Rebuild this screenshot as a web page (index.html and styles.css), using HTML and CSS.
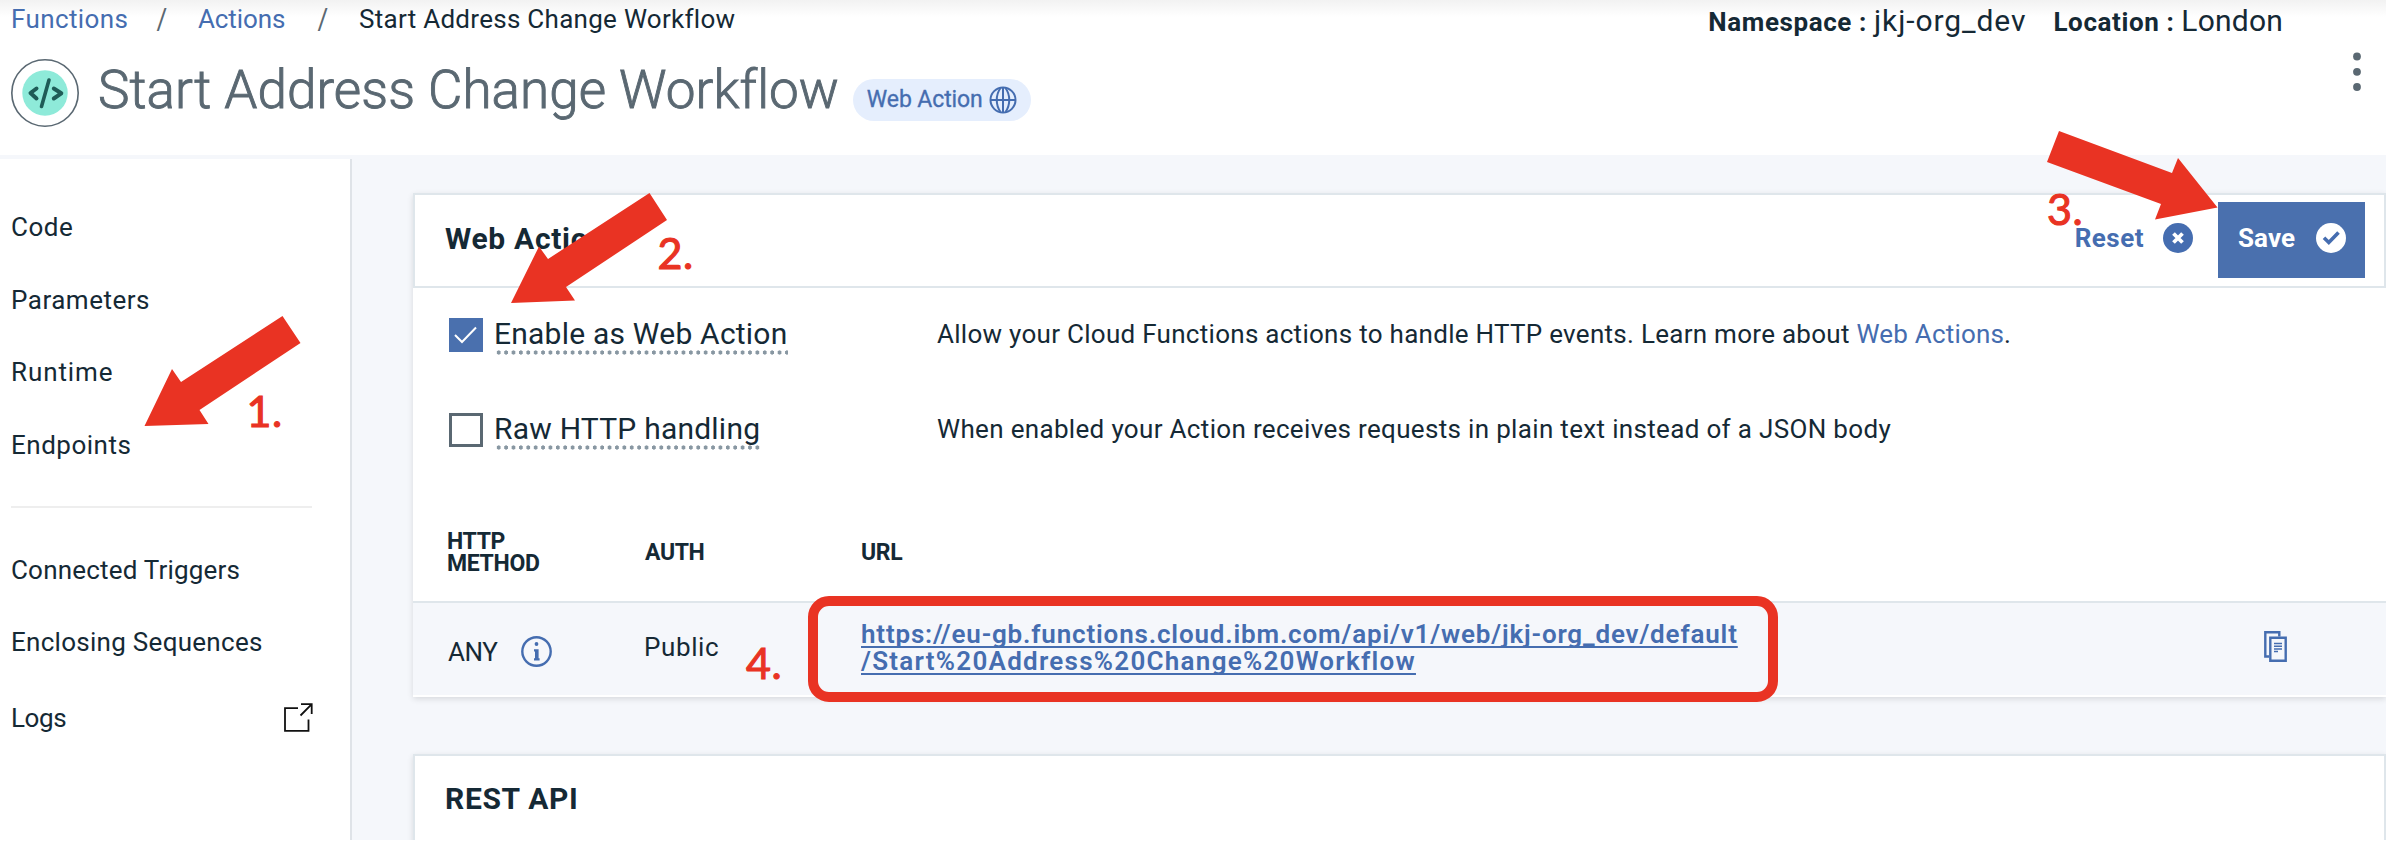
FILE: index.html
```html
<!DOCTYPE html>
<html lang="en">
<head>
<meta charset="utf-8">
<title>Start Address Change Workflow</title>
<link rel="stylesheet" href="styles.css">
</head>
<body>
<div class="page">
  <header class="header">
    <div class="header-top">
      <nav class="breadcrumb">
        <a class="crumb crumb-functions">Functions</a><span class="slash">/</span><a class="crumb crumb-actions">Actions</a><span class="slash">/</span><span class="crumb-current">Start Address Change Workflow</span>
      </nav>
      <div class="meta">
        <span class="meta-label">Namespace :</span><span class="meta-value meta-namespace">jkj-org_dev</span>
        <span class="meta-label">Location :</span><span class="meta-value">London</span>
      </div>
    </div>
    <div class="title-row">
      <svg class="action-icon" width="70" height="70" viewBox="0 0 70 70">
        <circle cx="35" cy="35" r="33.2" fill="#fff" stroke="#5a6872" stroke-width="1.6"/>
        <circle cx="35" cy="35" r="22.7" fill="#8eead9"/>
        <g fill="none" stroke="#1f5c57" stroke-width="4" stroke-linecap="round" stroke-linejoin="round">
          <path d="M26.5 30.5 20.5 35l6 5.500M43.800 30.500l7.500 4.800-7.500 5.200"/>
          <path d="M39 22 31.500 48.500" stroke-width="3.600"/>
        </g>
      </svg>
      <h1 class="title">Start Address Change Workflow</h1>
      <span class="badge">Web Action
        <svg class="globe" width="28" height="28" viewBox="0 0 28 28" fill="none" stroke="#456db0" stroke-width="2">
          <circle cx="14" cy="14" r="12.500"/><path d="M14 1.500v25M1.500 14h25"/>
          <path d="M11.500 2C6.500 9 6.500 19 11.500 26M16.500 2c5 7 5 17 0 24"/>
        </svg>
      </span>
      <svg class="kebab" width="10" height="40" viewBox="0 0 10 40" fill="#5a6872"><circle cx="5" cy="4.500" r="3.900"/><circle cx="5" cy="19.800" r="3.900"/><circle cx="5" cy="35" r="3.900"/></svg>
    </div>
  </header>

  <div class="content">
    <aside class="sidebar">
      <a class="nav-item n-wide">Code</a>
      <a class="nav-item n-wide">Parameters</a>
      <a class="nav-item n-wider">Runtime</a>
      <a class="nav-item n-wide">Endpoints</a>
      <hr class="divider">
      <a class="nav-item n-tight">Connected Triggers</a>
      <a class="nav-item">Enclosing Sequences</a>
      <a class="nav-item nav-logs"><span>Logs</span>
        <svg width="30" height="30" viewBox="0 0 30 30" fill="none" stroke="#111" stroke-width="1.800">
          <path d="M15 5.200H2v22.600h23.500V16.500"/><path d="M18 1.200h10.700V11M28.500 1.400 17.500 12.500"/>
        </svg>
      </a>
    </aside>

    <main class="main">
      <section class="card">
        <div class="card-head">
          <h2 class="card-title">Web Action</h2>
          <div class="head-actions">
            <button class="reset">Reset
              <svg width="30" height="30" viewBox="0 0 30 30"><circle cx="15" cy="15" r="15" fill="#456db0"/><path d="m10.500 10.500 9 9m0-9-9 9" stroke="#fff" stroke-width="3.800"/></svg>
            </button>
            <button class="save">Save
              <svg width="30" height="30" viewBox="0 0 30 30"><circle cx="15" cy="15" r="15" fill="#fff"/><path d="m8 14.800 4.800 4.700 9.700-10" fill="none" stroke="#456db0" stroke-width="3.600"/></svg>
            </button>
          </div>
        </div>
        <div class="option">
          <svg class="check" width="34" height="34" viewBox="0 0 34 34"><path fill="#4a70ae" d="M0 0h34v34H0z"/><path d="m6 17 7 7L27 9.500" fill="none" stroke="#fff" stroke-width="2"/></svg>
          <div class="option-label"><span class="dotted">Enable as Web Action</span></div>
          <p class="desc">Allow your Cloud Functions actions to handle HTTP events. Learn more about <a class="link">Web Actions</a>.</p>
        </div>
        <div class="option">
          <span class="check box"></span>
          <div class="option-label"><span class="dotted">Raw HTTP handling</span></div>
          <p class="desc desc-raw">When enabled your Action receives requests in plain text instead of a JSON body</p>
        </div>
        <div class="grid-row table-head">
          <span>HTTP<br>METHOD</span><span>AUTH</span><span>URL</span>
        </div>
        <div class="grid-row table-row">
          <span class="method">ANY
            <svg width="31" height="31" viewBox="0 0 31 31"><circle cx="15.500" cy="15.500" r="14.200" fill="none" stroke="#456db0" stroke-width="2.400"/><circle cx="15.500" cy="8" r="1.900" fill="#456db0"/><path d="M13 13.200h4.600v9h1v2.400h-5.600v-2.400h1v-6.600h-1z" fill="#456db0"/></svg>
          </span>
          <span class="auth">Public</span>
          <a class="url"><span class="url-a">https://eu-gb.functions.cloud.ibm.com/api/v1/web/jkj-org_dev/default</span><span class="url-b">/Start%20Address%20Change%20Workflow</span></a>
          <svg class="copy" width="24" height="32" viewBox="0 0 24 32" fill="none" stroke="#456db0" stroke-width="2.400">
            <path d="M5 25.500H1.300V1.300H15.300V5.500"/><path d="M6.300 6.800h15.400v23H6.300z"/>
            <path d="M10 12.500h8M10 15.300h8M10 18h8M10 20.500h4" stroke-width="1.500"/>
          </svg>
        </div>
      </section>

      <section class="card card-rest">
        <h2 class="rest-title">REST API</h2>
      </section>
    </main>
  </div>

  <svg class="annotations" width="2386" height="844" viewBox="0 0 2386 844">
    <g class="arrows">
      <polygon points="282.500,316 300.500,343 199.500,410 208.500,424 144.500,426 172,369 181,382"/>
      <polygon points="649.500,193 667,220 566,287 575,300.500 511,303 539,246.500 548,259"/>
      <polygon points="2059,131 2172,173 2178,158 2217.500,207.500 2155,219.500 2161,204 2047,162"/>
    </g>
    <rect class="frame" x="813" y="601" width="960" height="96" rx="16"/>
    <g class="numbers">
      <text x="246.500" y="427">1.</text>
      <text x="657.500" y="269">2.</text>
      <text x="2047" y="225">3.</text>
      <text x="746" y="679">4.</text>
    </g>
  </svg>
</div>
</body>
</html>
```
FILE: styles.css
```css
* { box-sizing: border-box; }
body {
  margin: 0;
  background: #fff;
  color: #152935;
  font: 26px/30px Roboto, "Liberation Sans", sans-serif;
  letter-spacing: 0.28px;
}
h1, h2, p { margin: 0; }
svg { flex: none; display: block; }
button { border: 0; background: none; padding: 0; font: inherit; letter-spacing: inherit; color: inherit; }
.page { position: relative; width: 2386px; height: 840px; overflow: hidden; display: flex; flex-direction: column; }

.header { height: 155px; flex: none; background: linear-gradient(#f2f2f2, #fff 17px); }
.header-top { display: flex; justify-content: space-between; align-items: flex-start; height: 58px; padding: 4px 103px 0 11px; }
.breadcrumb { display: flex; white-space: nowrap; }
.crumb, .link { color: #456db0; }
.crumb-functions { width: 115px; letter-spacing: 0.39px; }
.crumb-actions { width: 89px; letter-spacing: -0.1px; }
.slash { width: 72px; text-align: center; color: #5a6872; transform: scaleY(1.1); }
.meta { display: flex; align-items: baseline; padding-top: 2px; }
.meta-label { font-weight: 700; letter-spacing: 0.6px; margin-right: 7px; }
.meta-value { font-size: 30px; letter-spacing: 0.2px; }
.meta-namespace { letter-spacing: 0.91px; margin-right: 27px; }

.title-row { display: flex; align-items: flex-start; padding-left: 10px; }
.title { margin: -3px 0 0 18px; font-size: 53px; line-height: 70px; font-weight: 300; letter-spacing: 0.04px; color: #5a6872; white-space: nowrap; -webkit-text-stroke: 0.9px #5a6872; }
.badge { display: flex; align-items: center; height: 42px; margin: 21px 0 0 14px; padding: 0 14px 1px 14px; gap: 6px; border-radius: 21px; background: #e5eefd; color: #456db0; font-size: 23px; letter-spacing: -0.1px; white-space: nowrap; -webkit-text-stroke: 0.3px #456db0; }
.kebab { margin: -6px 24px 0 auto; }

.content { display: flex; flex: 1; background: #f5f7fb; }
.sidebar { width: 352px; flex: none; margin-top: 4px; padding: 32px 37px 0 11px; background: #fff; border-right: 2px solid #dfe3e8; }
.nav-item { display: flex; align-items: center; height: 72.600px; white-space: nowrap; }
.n-wide { letter-spacing: 0.5px; }
.n-wider { letter-spacing: 0.9px; }
.n-tight { letter-spacing: 0.19px; }
.nav-logs { height: 78px; justify-content: space-between; letter-spacing: -0.4px; }
.divider { margin: 25px 1px 25px 0; height: 2px; border: 0; background: #eee; }

.main { flex: 1; padding: 38px 0 0 61px; }
.card { background: #fff; box-shadow: 0 2px 6px rgba(0, 0, 0, 0.12); }
.card-head { display: flex; justify-content: space-between; height: 95px; padding: 7px 19px 0 30px; border: 2px solid #dfe6eb; }
.card-title, .rest-title { font-size: 30px; line-height: 40px; font-weight: 700; letter-spacing: 0.68px; }
.card-title { margin-top: 17px; }
.head-actions { display: flex; font-weight: 700; }
.reset, .save { display: flex; align-items: center; height: 76px; padding-bottom: 4px; }
.reset { gap: 19px; margin-right: 25px; color: #456db0; letter-spacing: 0.48px; }
.save { width: 147px; padding-left: 20px; gap: 21px; background: #4a70ae; color: #fff; letter-spacing: 0.09px; }

.option { display: grid; grid-template-columns: 45px 443px 1fr; align-items: center; height: 94.500px; padding-left: 36px; }
.box { display: block; width: 34px; height: 34px; border: 3.500px solid #5a6872; }
.option-label { font-size: 30px; line-height: 42px; white-space: nowrap; letter-spacing: 0.22px; margin-top: -2px; }
.dotted { display: inline-block; background: radial-gradient(circle, #8897a2 1.900px, transparent 2.300px) 1px 100% / 7.400px 5px repeat-x; }
.desc { margin-top: -2px; white-space: nowrap; }
.desc-raw { letter-spacing: 0.33px; }
.link { letter-spacing: 0.19px; }

.grid-row { display: grid; grid-template-columns: 198px 216px 1404px auto; justify-content: start; padding-left: 33px; }
.table-head { align-items: center; height: 98px; margin-top: 26px; padding-left: 34px; padding-top: 2px; font-size: 23px; line-height: 22.500px; font-weight: 700; letter-spacing: -0.35px; }
.table-row { height: 96px; align-items: center; background: #f5f7fb; border-top: 2px solid #dfe6eb; border-bottom: 2px solid #fff; }
.method { display: flex; align-items: center; gap: 24px; padding: 5px 0 0 2px; letter-spacing: -0.5px; }
.auth { margin-top: -4px; letter-spacing: 0.6px; }
.url { display: flex; flex-direction: column; align-items: flex-start; margin: -3px 0 0 1px; color: #456db0; font-weight: 600; line-height: 26.700px; white-space: nowrap; text-decoration: underline; text-decoration-thickness: 2px; text-decoration-skip-ink: none; text-underline-offset: 3px; }
.url-a { letter-spacing: 0.83px; }
.url-b { letter-spacing: 1.270px; }
.copy { margin-top: -4px; }

.card-rest { height: 120px; margin-top: 57px; padding: 23px 30px; border: 2px solid #dfe6eb; }

.annotations { position: absolute; left: 0; top: 0; }
.arrows, .numbers { fill: #e93323; }
.frame { fill: none; stroke: #e93323; stroke-width: 10; }
.numbers { font: 43px Lato, sans-serif; letter-spacing: 0.5px; stroke: #e93323; stroke-width: 1.1px; }
```
